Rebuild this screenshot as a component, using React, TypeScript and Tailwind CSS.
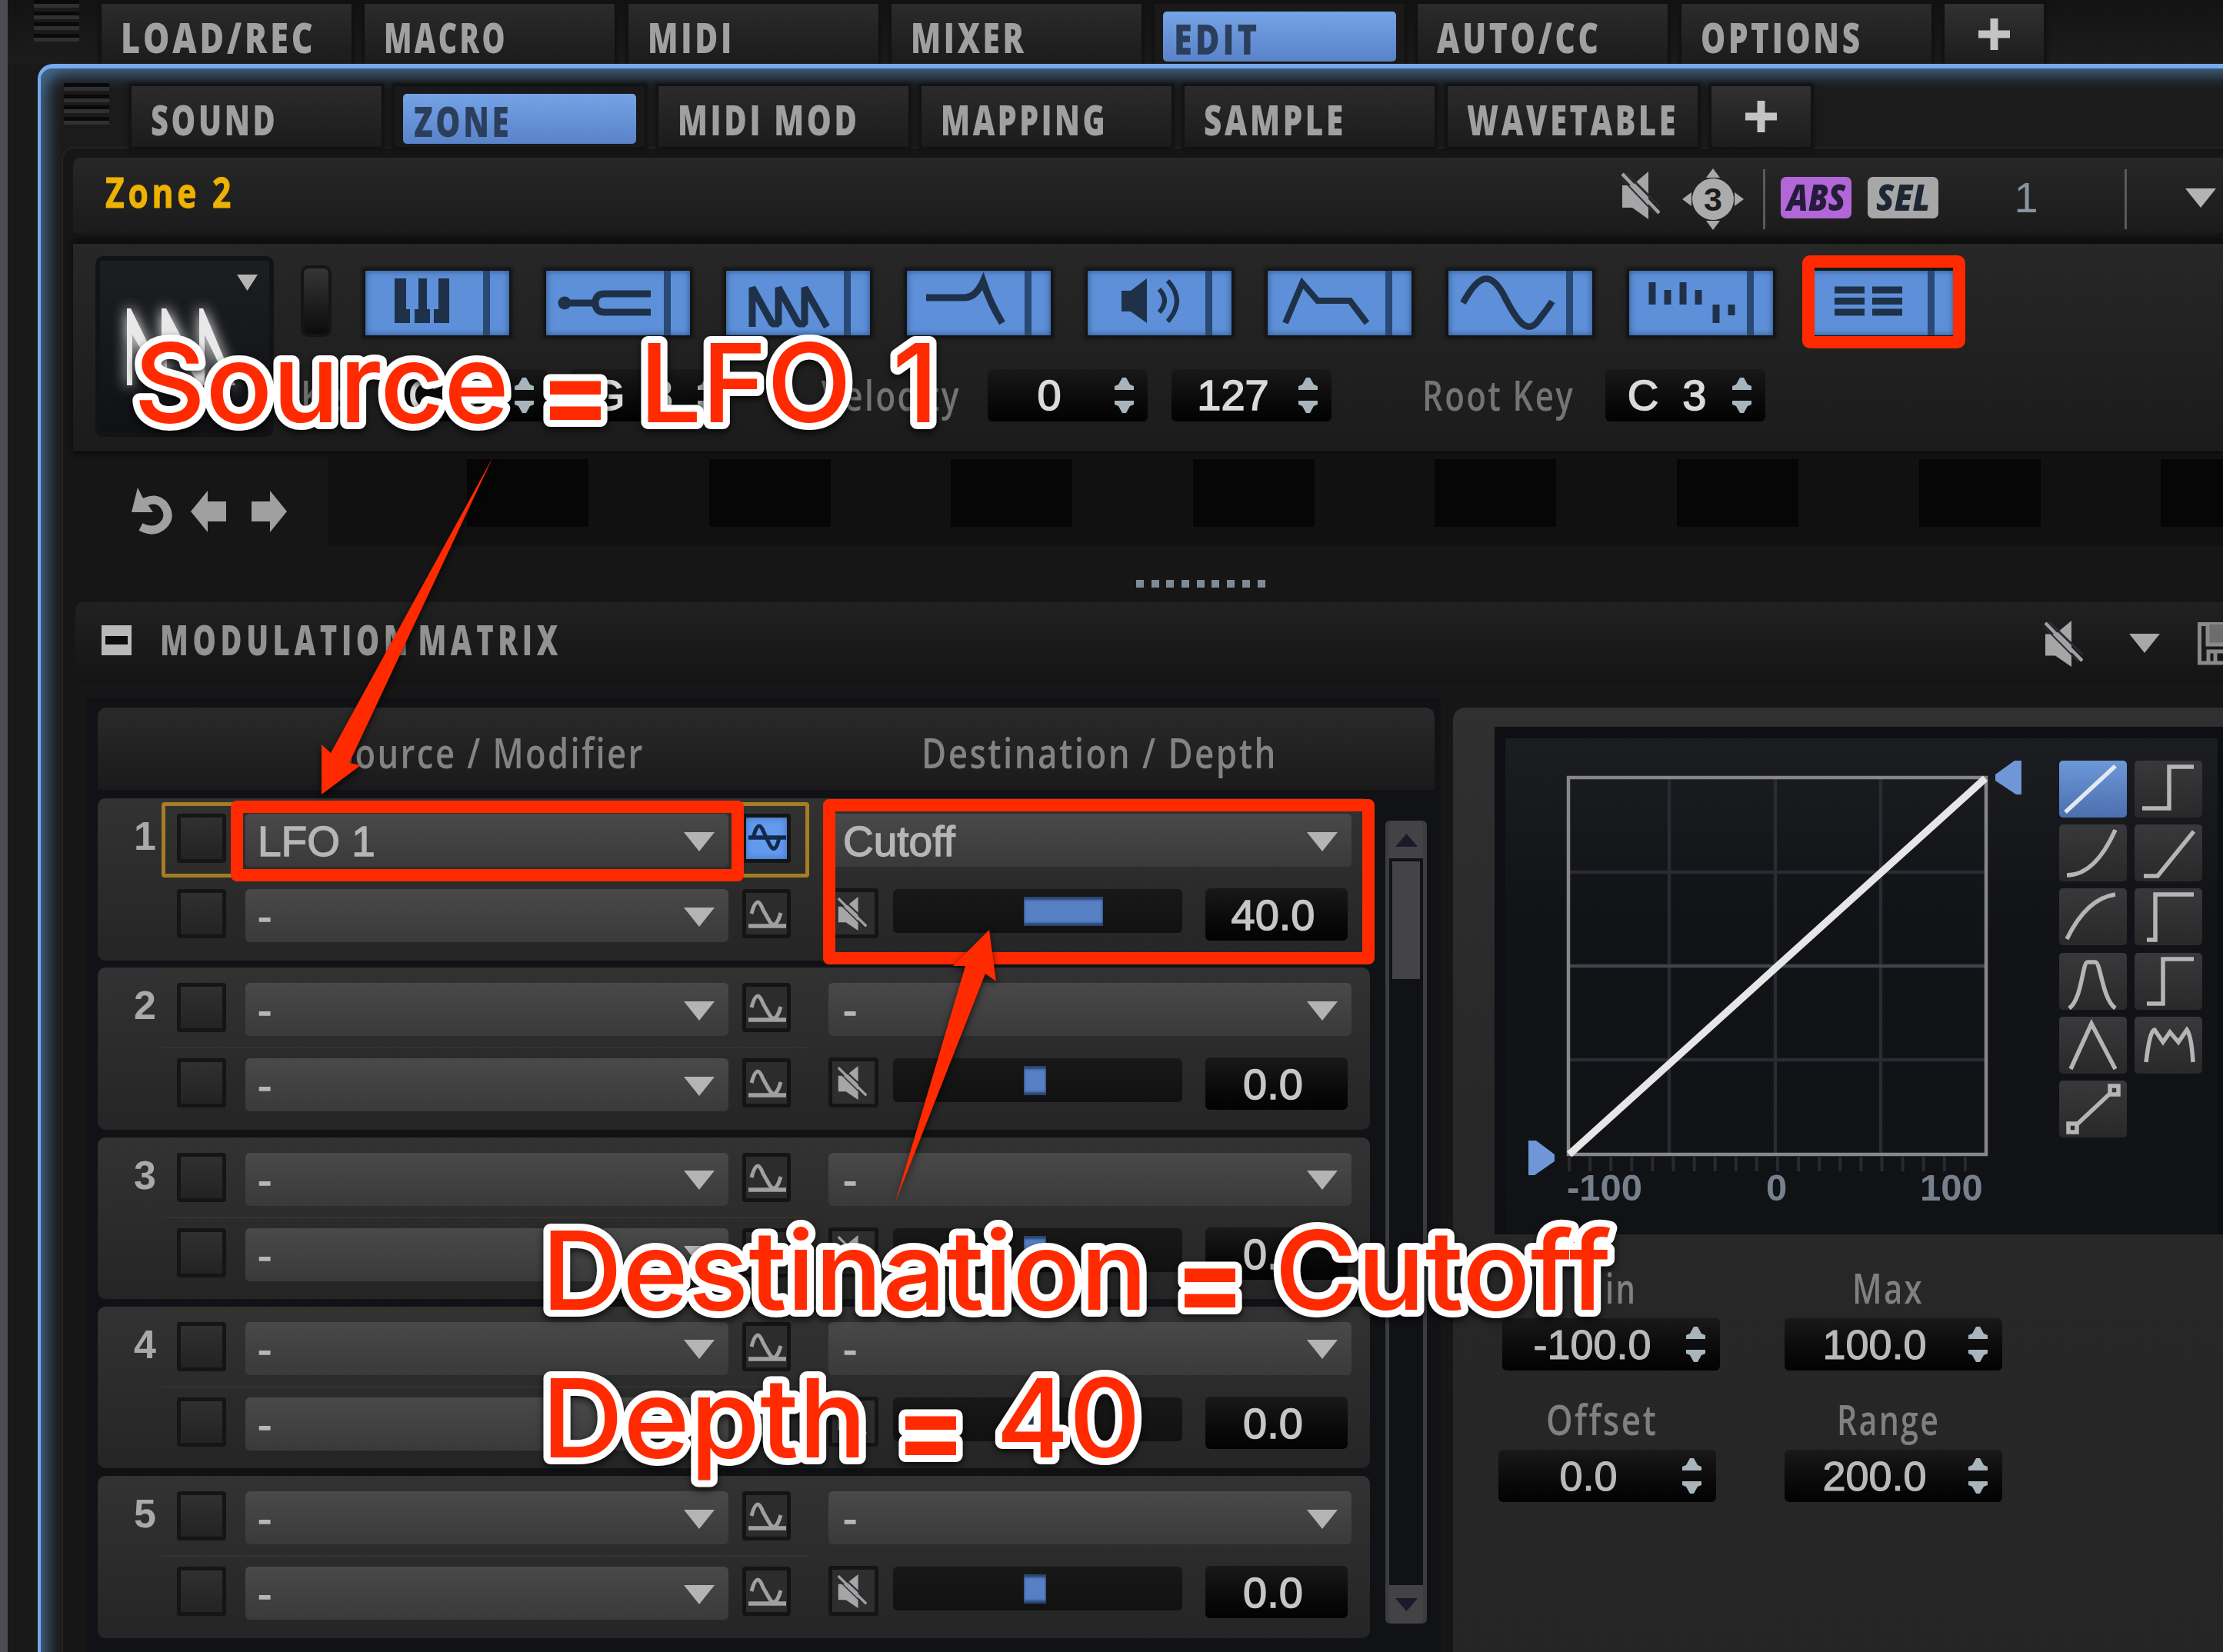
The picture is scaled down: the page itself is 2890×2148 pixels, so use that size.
import { useLayoutEffect, useRef, useState, type ReactNode } from "react";

type FitTextProps = {
  width: number;
  className?: string;
  children: ReactNode;
};

// Squeezes a line of text horizontally so that it fills the given width
function FitText({ width, className = "", children }: FitTextProps) {
  const ref = useRef<HTMLSpanElement>(null);
  const [scale, setScale] = useState(1);

  useLayoutEffect(() => {
    if (ref.current) setScale(width / ref.current.offsetWidth);
  }, [width, children]);

  return (
    <span className="block shrink-0" style={{ width }}>
      <span
        ref={ref}
        className={`inline-block origin-left whitespace-pre leading-none ${className}`}
        style={{ transform: `scaleX(${scale})` }}
      >
        {children}
      </span>
    </span>
  );
}

const mainTabs = [
  { label: "LOAD/REC", width: 254 },
  { label: "MACRO", width: 161 },
  { label: "MIDI", width: 113 },
  { label: "MIXER", width: 151 },
  { label: "EDIT", width: 112, active: true },
  { label: "AUTO/CC", width: 214 },
  { label: "OPTIONS", width: 211 },
];

const subTabs = [
  { label: "SOUND", width: 165 },
  { label: "ZONE", width: 127, active: true },
  { label: "MIDI MOD", width: 237 },
  { label: "MAPPING", width: 217 },
  { label: "SAMPLE", width: 185 },
  { label: "WAVETABLE", width: 275 },
];

type Tab = { label: string; width: number; active?: boolean };

function Grip() {
  return (
    <div className="flex flex-col w-[59px] shrink-0">
      {[0, 1, 2, 3].map((i) => (
        <div key={i} className="h-[14.6px] bg-[#1a1a1a]">
          <div className="h-[5px] bg-[#090909]" />
          <div className="h-[5px] bg-[#303030]" />
        </div>
      ))}
    </div>
  );
}

function TabRow({ tabs }: { tabs: Tab[] }) {
  return (
    <div className="flex gap-[17.3px] h-[79px]">
      {tabs.map((t) => (
        <div
          key={t.label}
          className={`w-[325px] shrink-0 flex shadow-[0_0_4px_4px_#111111] ${t.active ? "bg-[#191919]" : "bg-linear-to-b from-[#2b2b2b] to-[#1b1b1b]"}`}
        >
          {t.active ? (
            <div className="ml-[11px] mt-[10px] w-[303px] h-[65px] rounded-[5px] bg-linear-to-b from-[#75a3e6] to-[#5a82c8] flex items-center pl-[14px] pt-[3px]">
              <FitText width={t.width} className="font-['Open_Sans'] font-extrabold text-[55px] tracking-[5px] text-[#2b3f5c]">{t.label}</FitText>
            </div>
          ) : (
            <div className="flex items-center pl-[25px] pt-[6px]">
              <FitText width={t.width} className="font-['Open_Sans'] font-extrabold text-[55px] tracking-[5px] text-[#a0a0a0]">{t.label}</FitText>
            </div>
          )}
        </div>
      ))}
      <div className="w-[129px] shrink-0 bg-linear-to-b from-[#313131] to-[#1c1c1c] shadow-[0_0_4px_4px_#111111] flex justify-center">
        <svg className="mt-[19px] w-[41px] h-[41px]" viewBox="0 0 41 41">
          <path d="M20.5 0V41M0 20.5H41" stroke="#c4c4c4" strokeWidth="10" />
        </svg>
      </div>
    </div>
  );
}

function MuteIcon({ className }: { className: string }) {
  return (
    <svg className={className} viewBox="0 0 50 62" preserveAspectRatio="none">
      <path d="M1 18H14L35 0V62L14 47H1Z" fill="#a6a6a6" />
      <path d="M6 2L50 46" stroke="#2b2b30" strokeWidth="3" />
      <path d="M1 3L49 54" stroke="#a0a0a6" strokeWidth="4.500" />
      <path d="M0 9L44 55" stroke="#2b2b30" strokeWidth="2" />
    </svg>
  );
}

function Down({ className }: { className: string }) {
  return (
    <svg className={className} viewBox="0 0 40 25" preserveAspectRatio="none">
      <path d="M0 0H40L20 25Z" fill="currentColor" />
    </svg>
  );
}

function Spinner() {
  return (
    <svg className="w-[25px] h-[46px] shrink-0" viewBox="0 0 25 46">
      <path d="M10 0H15L20 9L25 11V16H0V11L5 9Z" fill="#a9b5bd" />
      <path d="M10 46H15L20 37L25 35V30H0V35L5 37Z" fill="#a9b5bd" />
    </svg>
  );
}

function SpinBox({ value, wide }: { value: string; wide?: boolean }) {
  return (
    <div className={`h-[68px] shrink-0 rounded-[6px] bg-linear-to-b from-[#191919] to-[#030303] flex items-center ${wide ? "w-[283px]" : "w-[208px]"}`}>
      <div className={`text-center whitespace-pre leading-none font-['Liberation_Sans'] ${wide ? "w-[234px] mr-[5px] text-[54px] text-[#b9b9b9] [-webkit-text-stroke:1.2px_#b9b9b9]" : "w-[160px] mr-[5px] text-[56px] text-[#dadada] [-webkit-text-stroke:1.6px_#dadada]"}`}>{value}</div>
      <Spinner />
    </div>
  );
}

const moduleIcons: ReactNode[] = [
  // keyboard
  <g fill="#1e3148">
    <path d="M38 10H53V50H58V68H38ZM69 10H80V50H84V68H64V50H69ZM95 10H109V68H89V50H95Z" />
  </g>,
  // tuning fork
  <g fill="none" stroke="#1e3148" strokeWidth="9">
    <path d="M136 30H76Q64 30 64 42Q64 54 76 54H136M64 42H18" />
    <circle cx="24" cy="42" r="4" fill="#1e3148" />
  </g>,
  // saw
  <path d="M34 73V22L60 69H68V22L94 69H102V22L131 73" fill="none" stroke="#1e3148" strokeWidth="9" strokeLinejoin="bevel" />,
  // filter
  <path d="M25 35H76Q90 34 99 14Q108 42 124 68" fill="none" stroke="#1e3148" strokeWidth="9" />,
  // amp
  <g>
    <path d="M44 26H56L77 10V68L56 53H44Z" fill="#1e3148" />
    <path d="M93 24Q107 39 93 54M104 13Q128 39 104 66" fill="none" stroke="#1e3148" strokeWidth="6" />
  </g>,
  // envelope
  <path d="M23 68L45 16L65 39H107L129 68" fill="none" stroke="#1e3148" strokeWidth="8" />,
  // lfo
  <path d="M19 42C39 5 54 0 71 30C91 70 104 85 119 62Q127 52 135 40" fill="none" stroke="#1e3148" strokeWidth="8.500" />,
  // step modulator
  <path d="M30 15V44M50 25V44M70 15V44M90 25V44M113 44V68M133 44V58" stroke="#1e3148" strokeWidth="9" />,
  // matrix
  <path d="M32 25H71M81 25H120M32 39.500H71M81 39.500H120M32 54H71M81 54H120" stroke="#1e3148" strokeWidth="9" />,
];

function ModuleButton({ icon }: { icon: ReactNode }) {
  return (
    <div className="w-[187px] h-[84px] shrink-0 bg-[#5d90d8] flex shadow-[0_0_4px_4px_#131313,inset_0_0_8px_#2b4d80]">
      <svg className="w-[153px] h-[84px]" viewBox="0 0 153 84">{icon}</svg>
      <div className="w-[9px] h-full bg-[#294873]" />
    </div>
  );
}

function Select({ value, className }: { value: string; className: string }) {
  return (
    <div className={`h-[69px] shrink-0 rounded-[6px] bg-linear-to-b from-[#494949] to-[#3a3a3a] flex items-center justify-between pr-[18px] ${className}`}>
      <span className="font-['Liberation_Sans'] text-[55px] leading-none text-[#b6b6b6] [-webkit-text-stroke:1.4px_#b6b6b6] pt-[4px]">{value}</span>
      <Down className="w-[40px] h-[25px] text-[#b4b4b4] mt-[3px]" />
    </div>
  );
}

function WaveButton({ active }: { active: boolean }) {
  return (
    <div className={`w-[63px] h-[64px] shrink-0 rounded-[4px] border-[5px] border-[#141414] ${active ? "bg-[#629aee] shadow-[inset_0_0_8px_#3c6cb8]" : "bg-[#2c2c2c]"}`}>
      {active ? (
        <svg viewBox="0 0 53 54" className="w-full h-full" fill="none" stroke="#14294a" strokeWidth="5">
          <path d="M3 26H52" strokeWidth="5.500" />
          <path d="M9 26L12 17Q17 5 22 17L30 34Q38 50 43 26" />
        </svg>
      ) : (
        <svg viewBox="0 0 53 54" className="w-full h-full" fill="none" stroke="#a0a0a0" strokeWidth="5">
          <path d="M3 43H52" strokeWidth="5.500" />
          <path d="M7 27Q14 0 22 22L30 36Q38 50 45 26" />
        </svg>
      )}
    </div>
  );
}

const matrixRows = [
  { source: "LFO 1", dest: "Cutoff", depth: "40.0", bar: 103 },
  { source: "-", dest: "-", depth: "0.0", bar: 29 },
  { source: "-", dest: "-", depth: "0.0", bar: 29 },
  { source: "-", dest: "-", depth: "0.0", bar: 29 },
  { source: "-", dest: "-", depth: "0.0", bar: 29 },
];

function SourceLine({ value, active, line }: { value: string; active: boolean; line: boolean }) {
  return (
    <div className={`w-[842px] h-[98px] pl-5 pt-[15px] flex items-start ${active ? "rounded-[4px] shadow-[inset_0_0_0_5px_#a67c24]" : line ? "shadow-[inset_0_2px_0_#38322b]" : ""}`}>
      <div className="w-[64px] h-[64px] shrink-0 rounded-[4px] border-[5px] border-[#151515] bg-linear-to-b from-[#303030] to-[#232323]" />
      <Select value={value} className="w-[628px] ml-[25px] pl-[16px]" />
      <div className="ml-[18px]">
        <WaveButton active={active} />
      </div>
    </div>
  );
}

function MatrixRow({ index }: { index: number }) {
  const row = matrixRows[index];
  return (
    <div className="w-[1654px] h-[210.5px] mb-[9.8px] shrink-0 rounded-[10px] bg-linear-to-b from-[#323232] to-[#252525] flex">
      <div className="w-[83px] pt-[21px] pr-[7px] text-right font-['Liberation_Sans'] font-bold text-[52px] text-[#a9a9a9] leading-[1.1]">{index + 1}</div>
      <div className="pt-[5px]">
        <SourceLine value={row.source} active={index === 0} line />
        <SourceLine value="-" active={false} line={index !== 0} />
      </div>
      <div className="ml-[25px] pt-[20px]">
        <Select value={row.dest} className="w-[680px] pl-[19px]" />
        <div className="flex mt-[28px]">
          <div className="w-[65px] h-[65px] rounded-[4px] border-[5px] border-[#151515] bg-[#2e2e2e] flex items-center justify-center pr-[4px]">
            <MuteIcon className="w-[38px] h-[44px]" />
          </div>
          <div className="ml-[19px] mt-[1px] w-[376px] h-[57px] rounded-[6px] bg-linear-to-b from-[#181818] to-[#111] pl-[170px] pt-[10px]">
            <div className="h-[38px] bg-[#5580c4] shadow-[inset_0_4px_3px_#2b4470,inset_0_-4px_3px_#2b4470]" style={{ width: row.bar }} />
          </div>
          <div className="ml-[30px] w-[185px] h-[68px] rounded-[6px] bg-linear-to-b from-[#191919] to-[#030303] flex items-center justify-center pr-[9px] pt-[2px] font-['Liberation_Sans'] text-[56px] leading-none text-[#c6c6c6] [-webkit-text-stroke:1.4px_#c6c6c6]">
            {row.depth}
          </div>
        </div>
      </div>
    </div>
  );
}

const curves: ReactNode[] = [
  <path d="M8 67L73 7" />,
  <path d="M10 62H45V8H77" />,
  <path d="M10 66C35 66 56 45 73 7" />,
  <path d="M12 67H30L77 9" />,
  <path d="M10 66C25 35 45 12 73 8" />,
  <path d="M16 67H27V8H77" />,
  <path d="M13 72C30 60 30 12 37 12H47C54 12 56 60 73 72" />,
  <path d="M16 66H37V8H77" />,
  <path d="M15 68L42 9L73 68" />,
  <path d="M15 59Q20 17 26 17L37 33L46 20L57 33L68 17Q74 25 76 59" />,
  <g>
    <path d="M21 59L67 16" />
    <path d="M12 56H23V67H12ZM66 7H77V18H66Z" />
  </g>,
];

const ticks = Array.from({ length: 20 }, (_, i) => 57 + i * 27.1);

function CurveEditor() {
  return (
    <div className="ml-[54px] mt-[25px] w-[947px] h-[660px] bg-[#0e0f12] pt-[15px] pl-[14px] pr-[7px]">
      <div className="h-[645px] bg-linear-to-b from-[#1c1d20] via-[#121316] via-35% to-[#111215] flex">
        <div className="ml-[26px] w-[650px]">
          <svg className="mt-[25px] w-[650px] h-[543px] block" viewBox="0 0 650 543">
            <path d="M187 26V516M325 26V516M462 26V516M56 149H600M56 393H600" stroke="#2a2b33" strokeWidth="4.500" />
            <path d="M56 271H600" stroke="#40454c" strokeWidth="4.500" />
            {ticks.map((x) => (
              <path key={x} d={`M${x} 519V538`} stroke="#292a31" strokeWidth="4" />
            ))}
            <rect x="56" y="26" width="543" height="490" fill="none" stroke="#878787" strokeWidth="4.500" />
            <path d="M57 516L598 27" stroke="#e6e6e6" strokeWidth="9.500" />
            <path d="M645 4V48L638 48L611 30V22L636 4Z" fill="#6f96d6" />
            <path d="M4 498V543H12L38 525V516L14 498Z" fill="#6f96d6" />
          </svg>
          <div className="-mt-[3px] flex ml-[54px] font-['Liberation_Sans'] font-bold text-[49px] leading-[38px] text-[#77818e]">
            <span className="w-[98px]">-100</span>
            <span className="w-[27px] ml-[161px]">0</span>
            <span className="ml-[173px]">100</span>
          </div>
        </div>
        <div className="ml-[44px] mt-[29px] grid grid-cols-[88px_88px] gap-x-[10px] gap-y-[9.2px] content-start">
          {curves.map((c, i) => (
            <div
              key={i}
              className={`w-[88px] h-[74px] rounded-[5px] bg-linear-to-b ${i === 0 ? "from-[#6d99d8] to-[#4c6eaf]" : "from-[#39393b] to-[#29292a]"}`}
            >
              <svg viewBox="0 0 88 74" className="w-full h-full" fill="none" stroke={i === 0 ? "#e4e9f0" : "#b5b5b5"} strokeWidth="5.500">
                {c}
              </svg>
            </div>
          ))}
        </div>
      </div>
    </div>
  );
}

function Field({ label, width, value, shift }: { label: string; width: number; value: string; shift?: boolean }) {
  return (
    <div className={`w-[283px] ${shift ? "-ml-[5px]" : ""}`}>
      <div className="h-[50px] mb-[14px] pr-[14px] pb-[3px] flex items-center justify-center">
        <FitText width={width} className="font-['Open_Sans'] font-semibold text-[54px] tracking-[3px] text-[#808080]">{label}</FitText>
      </div>
      <SpinBox value={value} wide />
    </div>
  );
}

const captions = [
  { text: "Source", x: 174, y: 549, length: 488 },
  { text: "=", x: 702, y: 562, length: 92 },
  { text: "LFO", x: 831, y: 549, length: 276 },
  { text: "1", x: 1160, y: 549, length: 60 },
  { text: "Destination", x: 704, y: 1703, length: 788 },
  { text: "=", x: 1527, y: 1716, length: 92 },
  { text: "Cutoff", x: 1657, y: 1703, length: 438 },
  { text: "Depth", x: 704, y: 1895, length: 423 },
  { text: "=", x: 1164, y: 1908, length: 92 },
  { text: "40", x: 1295, y: 1895, length: 188 },
];

function Annotations() {
  return (
    <div className="absolute inset-0">
      <div className="absolute left-[2343px] top-[332px] w-[212px] h-[121px] border-[16px] border-[#ff2a00] rounded-[10px]" />
      <div className="absolute left-[300px] top-[1041px] w-[667px] h-[105px] border-[16px] border-[#ff2a00] rounded-[8px]" />
      <div className="absolute left-[1070px] top-[1039px] w-[717px] h-[215px] border-[16px] border-[#ff2a00] rounded-[8px]" />
      <svg className="absolute inset-0 w-[2890px] h-[2148px] drop-shadow-[0_4px_5px_rgba(0,0,0,0.7)]" viewBox="0 0 2890 2148">
        <path d="M641 594L430 979L418 968V1033L469 995L454 992Z" fill="#ff2a00" />
        <path d="M1164 1563L1255 1256H1239L1286 1209L1295 1276L1281 1266Z" fill="#ff2a00" />
        {captions.map((c, i) => (
          <text
            key={i}
            x={c.x}
            y={c.y}
            textLength={c.length}
            lengthAdjust="spacingAndGlyphs"
            className={`font-['Inter'] text-[142px] [paint-order:stroke] ${c.text === "=" ? "font-bold" : "font-[550]"}`}
            fill="#ff2a00"
            stroke="#ffffff"
            strokeWidth="18"
            strokeLinejoin="round"
          >
            {c.text}
          </text>
        ))}
      </svg>
    </div>
  );
}

export default function App() {
  return (
    <div className="relative w-[2890px] h-[2148px] overflow-hidden bg-[#191919] flex">
      <div className="w-[10px] shrink-0 bg-[#4b4d51]" />
      <div className="w-[2880px] shrink-0">
        {/* Main tabs */}
        <div className="h-[83px] flex pl-[34px] bg-linear-to-b from-[#131313] to-[#1c1c1c]">
          <Grip />
          <div className="ml-[29px] mt-[5px] h-[78px]">
            <TabRow tabs={mainTabs} />
          </div>
        </div>

        {/* Edit window */}
        <div className="ml-[39px] w-[2870px] h-[2100px] relative border-l-[4px] border-t-[6px] border-[#75a9f0] rounded-tl-[20px] bg-[#1b1b1b] shadow-[inset_14px_14px_20px_-6px_#466a8c]">
          <div className="h-[102px] flex pl-[30px] pt-[19px]">
            <Grip />
            <div className="ml-[29px] mt-[4px]">
              <TabRow tabs={subTabs} />
            </div>
          </div>

          <div className="ml-[27px] w-[2810px] pl-[13px] pt-[12px] border-l-2 border-t-2 border-[#242424] rounded-tl-[16px] bg-[#161616]">
            {/* Zone title */}
            <div className="h-[98px] rounded-tl-[10px] bg-linear-to-b from-[#272727] to-[#1b1b1b] flex items-center pl-[42px] pr-[9px]">
              <div className="pb-[11px]">
                <FitText width={168} className="font-['Open_Sans'] font-bold text-[54px] tracking-[6px] text-[#eeb203] [-webkit-text-stroke:1px_#eeb203]">Zone 2</FitText>
              </div>
              <div className="ml-auto flex items-center">
                <MuteIcon className="w-[50px] h-[62px]" />
                <svg className="ml-[29px] mt-[10px] w-[80px] h-[80px]" viewBox="0 0 80 80">
                  <path d="M40 0L49 12H31ZM40 80L49 68H31ZM0 40L12 31V49ZM80 40L68 31V49Z" fill="#a8a8a8" />
                  <circle cx="40" cy="40" r="27" fill="#ababab" />
                  <text x="40" y="55" textAnchor="middle" fontFamily="Liberation Sans" fontWeight="700" fontSize="43" fill="#1c1c1c">3</text>
                </svg>
                <div className="ml-[25px] mt-[10px] w-[3px] h-[78px] bg-[#5a5a5a]" />
                <div className="ml-[20px] mt-[5px] w-[92px] h-[54px] rounded-[7px] bg-[#b267d8] flex items-center justify-center">
                  <FitText width={76} className="font-['Open_Sans'] font-extrabold italic text-[47px] text-[#251c3c]">ABS</FitText>
                </div>
                <div className="ml-[21px] mt-[5px] w-[92px] h-[54px] rounded-[7px] bg-[#a7a7a7] flex items-center justify-center">
                  <FitText width={70} className="font-['Open_Sans'] font-extrabold italic text-[47px] text-[#1d2733]">SEL</FitText>
                </div>
                <div className="w-[242px] pr-[14px] text-center font-['Liberation_Sans'] text-[56px] leading-none text-[#8793a2] mt-[5px]">1</div>
                <div className="mt-[10px] w-[3px] h-[78px] bg-[#5a5a5a]" />
                <Down className="ml-[76px] mt-[6px] w-[40px] h-[25px] text-[#b4b4b4]" />
              </div>
            </div>

            {/* Zone range and module buttons */}
            <div className="mt-[14px] h-[270px] bg-linear-to-b from-[#272727] to-[#1b1b1b] shadow-[0_-8px_6px_#0e0e0e,0_4px_4px_#0c0c0c] flex">
              <div className="ml-[29px] mt-[16px] w-[232px] h-[235px] rounded-[10px] border-[6px] border-[#121316] bg-linear-to-b from-[#1d1e22] to-[#0f1114]">
                <div className="flex justify-end pr-[15px] pt-[18px]">
                  <Down className="w-[27px] h-[21px] text-[#b4b4b4]" />
                </div>
                <svg className="ml-[24px] mt-[15px] w-[170px] h-[125px] drop-shadow-[0_0_9px_white]" viewBox="0 0 170 125">
                  <path d="M11 108V8H16L56 90V8H62L105 90V8H110L152 108H144L112 42V108H106L63 42V108H57L18 42V108Z" fill="#e8e8e8" />
                </svg>
              </div>
              <div className="ml-[35px] mt-[28px]">
                <div className="flex">
                  <div className="w-[40px] h-[93px] rounded-[10px] border-[4px] border-[#151515] bg-linear-to-b from-[#363636] to-[#0c0c0c]" />
                  <div className="flex gap-[47.7px] ml-[44px] mt-[7px]">
                    {moduleIcons.map((icon, i) => (
                      <ModuleButton key={i} icon={icon} />
                    ))}
                  </div>
                </div>
                <div className="flex items-center mt-[42px]">
                  <div className="w-[113px] pb-[3px]">
                    <FitText width={84} className="font-['Open_Sans'] font-semibold text-[54px] tracking-[3px] text-[#747474]">Key</FitText>
                  </div>
                  <SpinBox value="C -2" />
                  <div className="ml-[30px]">
                    <SpinBox value="G  8" />
                  </div>
                  <div className="ml-[118px] mr-[35px] pb-[3px]">
                    <FitText width={181} className="font-['Open_Sans'] font-semibold text-[54px] tracking-[3px] text-[#747474]">Velocity</FitText>
                  </div>
                  <SpinBox value="0" />
                  <div className="ml-[31px]">
                    <SpinBox value="127" />
                  </div>
                  <div className="ml-[118px] mr-[40px] pb-[3px]">
                    <FitText width={198} className="font-['Open_Sans'] font-semibold text-[54px] tracking-[3px] text-[#747474]">Root Key</FitText>
                  </div>
                  <SpinBox value="C  3" />
                </div>
              </div>
            </div>

            {/* Keyboard strip */}
            <div className="h-[123px] pt-[6px] flex">
              <div className="w-[331px] shrink-0 flex items-center pl-[76px] pt-[26px]">
                <svg className="w-[54px] h-[62px]" viewBox="0 0 54 62">
                  <path d="M12 22Q32 9 43 24Q52 38 41 49Q29 60 12 51" fill="none" stroke="#a0a0a0" strokeWidth="11" />
                  <path d="M0 32L8 0L14 12L28 32Z" fill="#a0a0a0" />
                </svg>
                <svg className="ml-[23px] w-[46px] h-[54px]" viewBox="0 0 46 54">
                  <path d="M0 27L22 0V14H46V40H22V54Z" fill="#a0a0a0" />
                </svg>
                <svg className="ml-[33px] w-[46px] h-[54px]" viewBox="0 0 46 54">
                  <path d="M46 27L24 0V14H0V40H24V54Z" fill="#a0a0a0" />
                </svg>
              </div>
              <div className="flex-1 bg-[#111111] flex gap-[156.6px] pl-[181px] pt-[4px] overflow-hidden">
                {[0, 1, 2, 3, 4, 5, 6, 7].map((k) => (
                  <div key={k} className="w-[158px] h-[88px] shrink-0 bg-[#060606]" />
                ))}
              </div>
            </div>
            <div className="h-[73px] flex gap-[9.7px] pl-[1382px] pt-[44px]">
              {[0, 1, 2, 3, 4, 5, 6, 7, 8].map((k) => (
                <div key={k} className="w-[10px] h-[10px] bg-[#7e8a94]" />
              ))}
            </div>

            {/* Modulation matrix header */}
            <div className="ml-[3px] h-[107px] rounded-l-[10px] bg-linear-to-b from-[#212121] to-[#141414] flex items-center pl-[34px] pb-[8px]">
              <div className="w-[39px] h-[39px] bg-[#b8b8b8] flex items-center justify-center">
                <div className="w-[29px] h-[11px] bg-[#0c0c0c]" />
              </div>
              <div className="ml-[37px] pb-[3px]">
                <FitText width={523} className="font-['Open_Sans'] font-extrabold text-[54px] tracking-[8px] [word-spacing:-12px] text-[#929292]">MODULATION MATRIX</FitText>
              </div>
              <div className="ml-auto flex items-center pt-[8px]">
                <MuteIcon className="w-[50px] h-[60px]" />
                <Down className="ml-[60px] w-[40px] h-[25px] text-[#a8a8a8]" />
                <div className="ml-[49px] w-[33px] overflow-hidden">
                  <svg className="w-[66px] h-[56px]" viewBox="0 0 66 56" fill="none" stroke="#8a8a8a" strokeWidth="5">
                    <path d="M2.500 2.500H63V53H2.500Z" />
                    <path d="M13 3V29H54V3" fill="#6d6d6d" />
                    <path d="M14 53V38H50V53M23 40V53" />
                  </svg>
                </div>
              </div>
            </div>

            <div className="mt-[17px] h-[1260px] flex">
              {/* Matrix table */}
              <div className="ml-[18px] w-[1760px] shrink-0 bg-[#111216] pt-[13px] pl-[14px]">
                <div className="w-[1738px] h-[107px] rounded-t-[12px] bg-linear-to-b from-[#2a2a2b] to-[#1a1a1a] flex items-center pl-[308px] pt-[8px]">
                  <FitText width={403} className="font-['Open_Sans'] font-semibold text-[54px] tracking-[3px] text-[#838383]">Source / Modifier</FitText>
                  <div className="ml-[360px]">
                    <FitText width={463} className="font-['Open_Sans'] font-semibold text-[54px] tracking-[3px] text-[#838383]">Destination / Depth</FitText>
                  </div>
                </div>
                <div className="mt-[11px] flex">
                  <div>
                    {matrixRows.map((_, i) => (
                      <MatrixRow key={i} index={i} />
                    ))}
                  </div>
                  <div className="ml-[20px] mt-[29px] w-[54px] h-[1044px] rounded-[6px] border-x-[5px] border-[#3d3d3f] bg-[#111216] flex flex-col overflow-hidden">
                    <div className="h-[49px] -mx-[1px] bg-[#434345] flex items-center justify-center pt-[2px]">
                      <Down className="w-[29px] h-[17px] text-[#1a1a2a] rotate-180" />
                    </div>
                    <div className="mt-[4px] mx-[4px] h-[153px] bg-[#444447]" />
                    <div className="mt-auto h-[50px] -mx-[1px] bg-[#434345] flex items-center justify-center">
                      <Down className="w-[29px] h-[17px] text-[#1a1a2a]" />
                    </div>
                  </div>
                </div>
              </div>

              {/* Curve and range */}
              <div className="ml-[16px] mt-[13px] w-[1001px] shrink-0 rounded-tl-[16px] bg-linear-to-b from-[#303030] via-[#282828] via-40% to-[#252525]">
                <CurveEditor />
                <div className="ml-[64px] mt-[45px] grid grid-cols-[283px_283px] gap-x-[84px] gap-y-[39px]">
                  <Field label="Min" width={80} value="-100.0" />
                  <Field label="Max" width={93} value="100.0" />
                  <Field label="Offset" width={145} value="0.0" shift />
                  <Field label="Range" width={134} value="200.0" />
                </div>
              </div>
            </div>
          </div>
        </div>
      </div>
      <Annotations />
    </div>
  );
}
